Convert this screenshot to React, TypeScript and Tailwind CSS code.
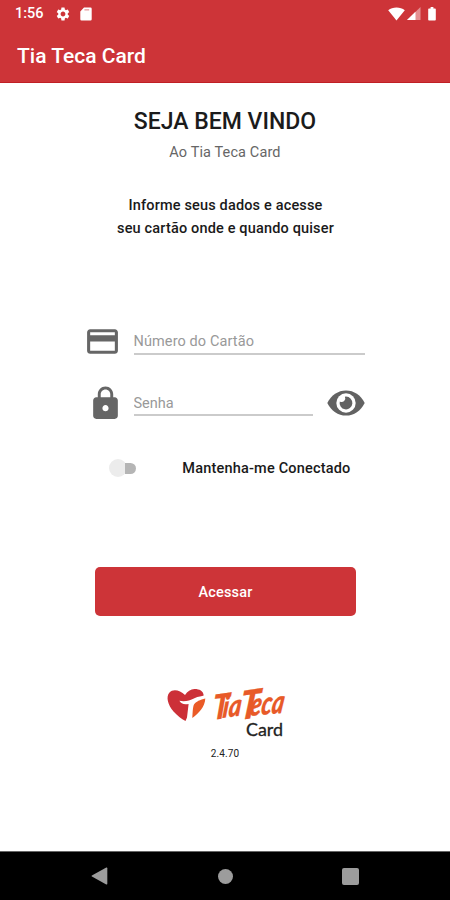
import { useState } from "react";
import { MdCreditCard, MdLock, MdSettings } from "react-icons/md";

const SdCardIcon = () => (
  <svg width="12" height="14" viewBox="0 0 12 14" fill="#fff">
    <path d="M4 0.5h6.5a1.2 1.2 0 0 1 1.2 1.2v10.6a1.2 1.2 0 0 1-1.2 1.2h-9a1.2 1.2 0 0 1-1.2-1.2V4.4z" />
    <path d="M4.4 2.2h4.8v1.3h-4.8z" fill="#e79a9c" />
  </svg>
);

const WifiIcon = () => (
  <svg width="17" height="14" viewBox="0 0 17 14" fill="#fff">
    <path d="M8.5 13.6 0.2 3.2C2.4 1.4 5.3.4 8.5.4s6.1 1 8.3 2.8z" />
  </svg>
);

const SignalIcon = () => (
  <svg width="14" height="13" viewBox="0 0 14 13">
    <path d="M13.5 0v13H0z" fill="#e58f91" />
    <path d="M8.5 4.8V13H0z" fill="#fff" />
  </svg>
);

const BatteryIcon = () => (
  <svg width="8" height="14" viewBox="0 0 8 14" fill="#fff">
    <path d="M2.6 0h2.8v1.4H7a.8.8 0 0 1 .8.8v10.6a.8.8 0 0 1-.8.8H1a.8.8 0 0 1-.8-.8V2.2a.8.8 0 0 1 .8-.8h1.6z" />
  </svg>
);

const EyeIcon = () => (
  <svg width="38" height="26" viewBox="0 0 38 26">
    <path
      d="M.3 13C4.2 5 11 .4 19 .4S33.8 5 37.7 13C33.8 21 27 25.6 19 25.6S4.2 21 .3 13z"
      fill="#626262"
    />
    <circle cx="19" cy="13" r="9.7" fill="#fff" />
    <path
      d="M19 6.6a6.4 6.4 0 1 1-6.2 4.8 3.6 3.6 0 0 0 5.1-4.7z"
      fill="#626262"
    />
  </svg>
);

const Logo = () => (
  <svg
    width="126"
    height="58"
    viewBox="0 0 126 58"
    overflow="visible"
    className="font-[Lato,sans-serif]"
  >
    <path
      d="M22 8C17 3 10 1.5 6.500 5.500C2.500 10 5 18 10.500 24.500c3.500 4 8 7.300 12 9.500l1.500-3.500 1.600-13.500c-5 1-7.600-.4-9.200-3.200 6 1.200 10-.4 15-2.600 4-1.700 7.600-1.800 9.300-2.600C40.500 4 36 2 31.500 2.100 27.500 2.200 24.500 4.500 22 8z"
      fill="#cc3038"
    />
    <path
      d="M42.300 11.500c-5 1.300-9.500 3-11.300 6-1.300 2.500-1.300 8.500-1.700 13.500C35.500 26.500 42 20 42.300 11.500z"
      fill="#ea5b27"
    />
    <g
      fill="#e85a28"
      stroke="#e85a28"
      strokeWidth="0.3"
      fontWeight="900"
      fontStyle="italic"
    >
      <text
        transform="translate(49 33) rotate(-8) skewX(-12)"
        fontSize="34"
        textLength="17"
        lengthAdjust="spacingAndGlyphs"
      >
        T
      </text>
      <text
        transform="translate(59 31) rotate(-8) skewX(-14)"
        fontSize="30"
        textLength="19"
        lengthAdjust="spacingAndGlyphs"
      >
        ia
      </text>
      <text
        transform="translate(76 33) rotate(-8) skewX(-14)"
        fontSize="39"
        textLength="20"
        lengthAdjust="spacingAndGlyphs"
      >
        T
      </text>
      <text
        transform="translate(86 29) rotate(-5) skewX(-14)"
        fontSize="32"
        textLength="34"
        lengthAdjust="spacingAndGlyphs"
      >
        eca
      </text>
    </g>
    <text
      x="83"
      y="48.500"
      fontSize="17"
      fill="#222"
      stroke="#222"
      strokeWidth="0.3"
      textLength="37"
      lengthAdjust="spacingAndGlyphs"
    >
      Card
    </text>
  </svg>
);

const App = () => {
  const [card, setCard] = useState("");
  const [password, setPassword] = useState("");
  const [visible, setVisible] = useState(false);
  const [keep, setKeep] = useState(false);

  return (
    <div className="flex h-[900px] w-[450px] flex-col overflow-hidden bg-white font-[Roboto,sans-serif]">
      <header className="h-[83px] border-b border-[#c01f24] bg-[#cd3438] text-white">
        <div className="flex h-[27px] items-center pl-[15px] pr-[14px]">
          <span className="w-[40px] text-[14.5px] font-medium">1:56</span>
          <MdSettings size={16} />
          <span className="ml-[9px]">
            <SdCardIcon />
          </span>
          <div className="ml-auto flex items-center gap-[2px]">
            <WifiIcon />
            <SignalIcon />
            <span className="ml-[5px]">
              <BatteryIcon />
            </span>
          </div>
        </div>
        <h1 className="pl-[17px] pt-[13px] text-[21px] font-medium leading-8">
          Tia Teca Card
        </h1>
      </header>

      <main className="flex flex-1 flex-col items-center">
        <h2 className="mt-[23px] text-[23px] font-medium leading-8 text-[#1b1b1b]">
          SEJA BEM VINDO
        </h2>
        <p className="mt-[5px] text-[14.5px] leading-5 tracking-[0.12px] text-[#666]">
          Ao Tia Teca Card
        </p>
        <p className="mt-[31px] pl-px text-center text-[14.5px] font-medium leading-[23px] tracking-[0.16px] text-[#1a1a1a]">
          Informe seus dados e acesse
          <br />
          seu cartão onde e quando quiser
        </p>

        <form className="mr-[2px] mt-[81px] flex w-[281px] flex-col">
          <div className="flex h-[40px] items-center">
            <MdCreditCard size={37} className="text-[#666]" />
            <input
              value={card}
              onChange={(e) => setCard(e.target.value)}
              placeholder="Número do Cartão"
              className="ml-[13px] h-[27px] w-[231px] border-b-2 border-[#cbcbcb] pt-[3px] text-[14.5px] tracking-[0.1px] text-[#333] outline-none placeholder:text-[#999]"
            />
          </div>
          <div className="mt-[21px] flex h-[40px] items-center">
            <MdLock size={37} className="ml-[3px] mt-[2px] text-[#666]" />
            <input
              type={visible ? "text" : "password"}
              value={password}
              onChange={(e) => setPassword(e.target.value)}
              placeholder="Senha"
              className="ml-[10px] h-[27px] w-[179px] border-b-2 border-[#cbcbcb] pt-[4px] text-[14.5px] text-[#333] outline-none placeholder:text-[#999]"
            />
            <button
              type="button"
              onClick={() => setVisible(!visible)}
              className="ml-[14px] mt-px"
            >
              <EyeIcon />
            </button>
          </div>
        </form>

        <div className="ml-[9px] mt-[34px] flex h-6 w-[242px] items-center justify-between">
          <button
            onClick={() => setKeep(!keep)}
            className="flex h-[18px] w-[28px] items-center"
          >
            <span className="size-[18px] shrink-0 rounded-full bg-[#ececec]" />
            <span className="-ml-[2px] h-[11px] w-[11px] rounded-r-full bg-[#b5b5b5]" />
          </button>
          <span className="pt-[2px] text-[14.5px] font-medium tracking-[0.19px] text-[#1a1a1a]">
            Mantenha-me Conectado
          </span>
        </div>

        <button className="mt-[87px] h-[49px] w-[261px] shrink-0 rounded-[5px] bg-[#cd3438] pl-px pt-[2px] text-[14.5px] font-medium tracking-[0.15px] text-white">
          Acessar
        </button>

        <div className="ml-[2px] mt-[71px]">
          <Logo />
        </div>
        <span className="mt-px text-[10px] leading-4 tracking-[0.1px] text-[#222]">
          2.4.70
        </span>
      </main>

      <nav className="flex h-[49px] items-center justify-between border-t border-[#666] bg-black px-[91px]">
        <svg width="17" height="18" viewBox="0 0 17 18" fill="#9c9c9c">
          <path d="M15.3.6c.6-.3 1 0 1 .6v15.6c0 .6-.4.9-1 .6L.9 9.5a.6.6 0 0 1 0-1z" />
        </svg>
        <span className="size-[15px] rounded-full bg-[#9c9c9c]" />
        <span className="size-[17px] rounded-[2px] bg-[#9c9c9c]" />
      </nav>
    </div>
  );
};

export default App;
